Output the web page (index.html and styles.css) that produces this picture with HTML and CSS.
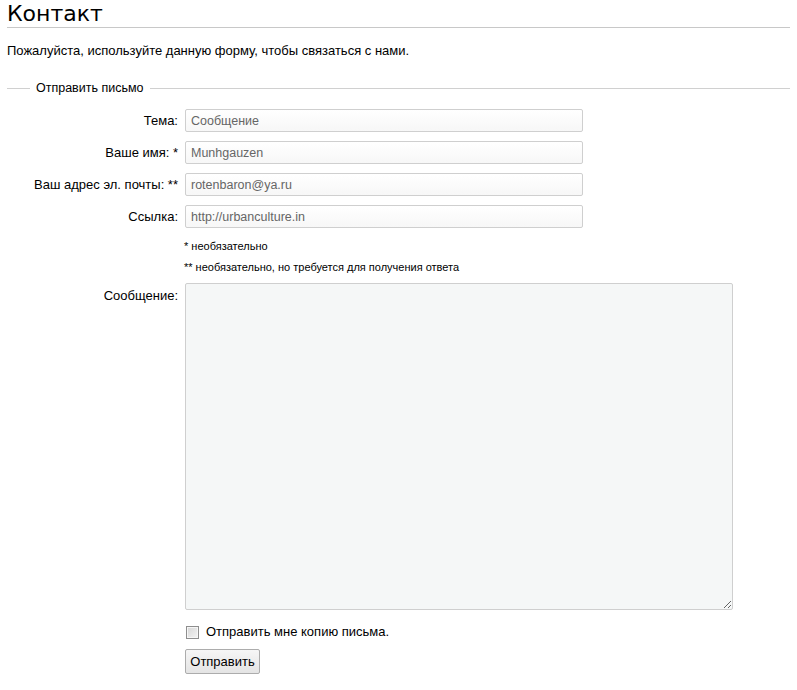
FILE: index.html
```html
<!DOCTYPE html>
<html lang="ru">
<head>
<meta charset="utf-8">
<title>Контакт</title>
<link rel="stylesheet" href="styles.css">
</head>
<body>
<h1 class="title">Контакт</h1>
<p class="intro">Пожалуйста, используйте данную форму, чтобы связаться с нами.</p>
<form class="form">
  <fieldset class="box">
    <legend class="legend">Отправить письмо</legend>
    <div class="grid">
      <label class="lbl" for="f1">Тема:</label>
      <input class="inp" id="f1" type="text" value="Сообщение">
      <label class="lbl" for="f2">Ваше имя: *</label>
      <input class="inp" id="f2" type="text" value="Munhgauzen">
      <label class="lbl" for="f3">Ваш адрес эл. почты: **</label>
      <input class="inp" id="f3" type="text" value="rotenbaron@ya.ru">
      <label class="lbl" for="f4">Ссылка:</label>
      <input class="inp" id="f4" type="text" value="http://urbanculture.in">
      <div class="notes">
        <div class="note">* необязательно</div>
        <div class="note">** необязательно, но требуется для получения ответа</div>
      </div>
      <label class="lbl lbl-top" for="f5">Сообщение:</label>
      <textarea class="area" id="f5"></textarea>
      <div class="check">
        <input class="cb" id="f6" type="checkbox">
        <label for="f6">Отправить мне копию письма.</label>
      </div>
      <div class="actions">
        <button class="btn" type="button">Отправить</button>
      </div>
    </div>
  </fieldset>
</form>
</body>
</html>
```

FILE: styles.css
```css
html, body { background: #fff; }
body {
  margin: 0 7px;
  font-family: "Liberation Sans", Arial, sans-serif;
  font-size: 13px;
  color: #000;
}
.title {
  margin: 0;
  padding-top: 1px;
  height: 26px;
  font-family: "DejaVu Sans", "Open Sans", sans-serif;
  font-weight: 400;
  font-size: 22px;
  line-height: normal;
  border-bottom: 1px solid #c8c8c8;
  color: #000;
}
.intro {
  margin: 15px 0 0;
  line-height: 16px;
}
.form { margin: 21px 0 0; }
.box {
  margin: 0;
  padding: 0;
  border: 0;
  border-top: 1px solid #d0d0d0;
  min-width: 0;
}
.legend {
  margin-left: 23px;
  padding: 0 6px;
  line-height: 16px;
  font-size: 12.5px;
}
.grid {
  display: grid;
  grid-template-columns: 171px 1fr;
  column-gap: 7px;
  row-gap: 9px;
  padding-top: 13px;
  align-items: center;
}
.lbl {
  text-align: right;
  color: #000;
}
.lbl-top { align-self: start; padding-top: 5px; }
.inp {
  box-sizing: border-box;
  width: 398px;
  height: 23px;
  margin: 0;
  padding: 0 5px;
  border: 1px solid #cfcfcf;
  border-radius: 2px;
  background: linear-gradient(#ffffff, #f7f7f7);
  font-family: "Liberation Sans", Arial, sans-serif;
  font-size: 12.5px;
  color: #666;
}
.notes {
  grid-column: 2;
  margin: -1px 0 -4px -1px;
  font-size: 11px;
}
.note { line-height: 21px; }
.area {
  box-sizing: border-box;
  width: 548px;
  height: 327px;
  margin: 0;
  border: 1px solid #cfcfcf;
  border-radius: 2px;
  background: #f5f7f7;
  resize: both;
  font-family: "Liberation Sans", Arial, sans-serif;
  font-size: 12px;
}
.check {
  grid-column: 2;
  display: flex;
  align-items: center;
  gap: 7px;
  margin-top: 5px;
  line-height: 16px;
}
.cb {
  appearance: none;
  -webkit-appearance: none;
  box-sizing: border-box;
  margin: 0 0 0 1px;
  width: 13px;
  height: 13px;
  border: 1px solid #8e8e8e;
  box-shadow: inset 0 0 0 1px #f6f6f6;
  background: linear-gradient(135deg, #d6d6d6, #f4f4f4);
}
.actions { grid-column: 2; }
.btn {
  box-sizing: border-box;
  width: 75px;
  height: 25px;
  margin: 0;
  padding: 0;
  border: 1px solid #acacac;
  border-radius: 2px;
  background: linear-gradient(#f6f6f6, #e4e4e4);
  font-family: "Liberation Sans", Arial, sans-serif;
  font-size: 13px;
  color: #000;
}
```
